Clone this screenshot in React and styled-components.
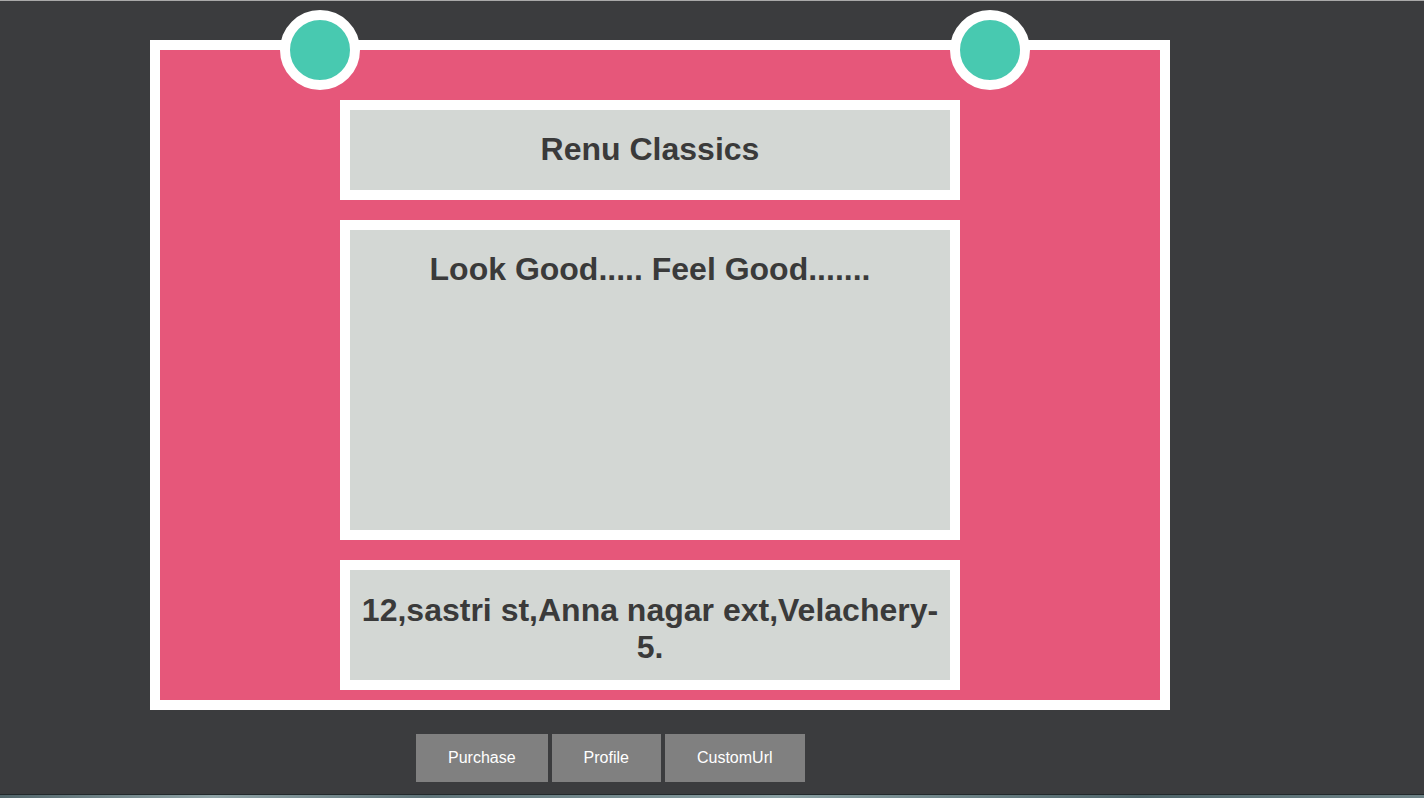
import React from "react";
import styled, { createGlobalStyle } from "styled-components";

const GlobalStyle = createGlobalStyle`
  html, body {
    margin: 0;
    padding: 0;
    background: #3b3c3e;
  }
  body {
    font-family: "Liberation Sans", Arial, sans-serif;
  }
`;

const Page = styled.div`
  min-height: 100vh;
  box-sizing: border-box;
  border-top: 1px solid #a9a9a9;
  display: flex;
  flex-direction: column;
`;

const Card = styled.div`
  position: relative;
  margin: 39px 0 0 150px;
  width: 1000px;
  height: 600px;
  background: #e6577a;
  border: 10px solid #fff;
  padding-top: 50px;
  box-sizing: content-box;
  display: flex;
  flex-direction: column;
  gap: 20px;
`;

const Pin = styled.div`
  position: absolute;
  top: -40px;
  left: ${(p) => p.left}px;
  width: 60px;
  height: 60px;
  border-radius: 50%;
  background: #48c9b0;
  border: 10px solid #fff;
`;

const Panel = styled.div`
  margin-left: 180px;
  width: 600px;
  height: ${(p) => p.h}px;
  flex-shrink: 0;
  background: #d3d7d4;
  border: 10px solid #fff;
  text-align: center;
  overflow: hidden;
`;

const Title = styled.h1`
  margin: ${(p) => p.top || 21}px 0 0;
  font-size: 32px;
  font-weight: bold;
  line-height: 37px;
  color: #3a3a3a;
`;

const Buttons = styled.div`
  display: flex;
  gap: 4px;
  margin: 24px 0 0 416px;
`;

const Button = styled.button`
  height: 48px;
  padding: 0 32px;
  border: none;
  background: #808080;
  color: #fff;
  font-family: "Liberation Sans", Arial, sans-serif;
  font-size: 16px;
  cursor: pointer;
`;

const Strip = styled.div`
  margin-top: auto;
  height: 3px;
  background: linear-gradient(90deg, #52666b, #8fa3a6 15%, #5f7479 30%, #8aa0a3 55%, #4e6469 80%, #6f8488);
  border-top: 1px solid #22282a;
`;

export default function App() {
  return (
    <>
      <GlobalStyle />
      <Page>
        <Card>
          <Pin left={120} />
          <Pin left={790} />
          <Panel h={80}>
            <Title>Renu Classics</Title>
          </Panel>
          <Panel h={300}>
            <Title>Look Good..... Feel Good.......</Title>
          </Panel>
          <Panel h={110}>
            <Title top={22}>12,sastri st,Anna nagar ext,Velachery-5.</Title>
          </Panel>
        </Card>
        <Buttons>
          <Button>Purchase</Button>
          <Button>Profile</Button>
          <Button>CustomUrl</Button>
        </Buttons>
        <Strip />
      </Page>
    </>
  );
}
